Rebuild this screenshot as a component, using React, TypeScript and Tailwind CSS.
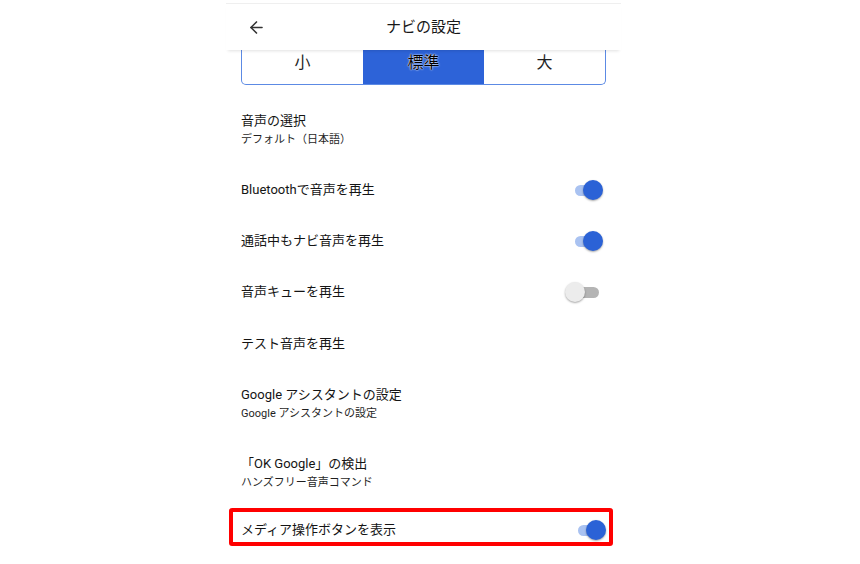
import { ArrowLeft } from "lucide-react";

const font = "font-['Roboto','Noto_Sans_CJK_JP',sans-serif]";

function Toggle({ on }: { on: boolean }) {
  return (
    <div className="relative w-[30px] h-[20px] shrink-0">
      <div
        className={`absolute left-[2px] right-[4px] top-[5px] h-[11px] rounded-full ${
          on ? "bg-[#a9c2f1]" : "bg-[#b4b4b4]"
        }`}
      />
      <div
        className={`absolute top-0 w-[20px] h-[20px] rounded-full shadow-[0_1px_2px_rgba(0,0,0,0.35)] ${
          on ? "right-0 bg-[#2b62d6]" : "left-[-8px] bg-[#ececec]"
        }`}
      />
    </div>
  );
}

function Row({
  title,
  sub,
  toggle,
}: {
  title: string;
  sub?: string;
  toggle?: boolean;
}) {
  return (
    <div className="flex items-center justify-between">
      <div className="flex flex-col">
        <span className="text-[13px] leading-[20px] text-[#141414]">{title}</span>
        {sub && (
          <span className="text-[11px] leading-[18px] text-[#1f1f1f]">{sub}</span>
        )}
      </div>
      {toggle !== undefined && (
        <div className="mr-[3px]">
          <Toggle on={toggle} />
        </div>
      )}
    </div>
  );
}

export default function App() {
  return (
    <div className={`w-[860px] h-[564px] bg-white overflow-hidden ${font}`}>
      <div className="w-[395px] ml-[226px] pt-[3px]">
        <div className="h-[47px] border-t border-[#efefef] flex items-center relative shadow-[0_3px_3px_-2px_rgba(0,0,0,0.12)]">
          <ArrowLeft className="absolute left-[21px] text-[#333]" size={19} strokeWidth={2} />
          <span className="w-full text-center text-[15px] text-[#181818]">ナビの設定</span>
        </div>

        <div className="mx-[15px] grid grid-cols-3 h-[35px] border-x border-b border-[#5c8ae4] rounded-b-[5px] overflow-hidden">
          <div className="text-center text-[16px] leading-[20px] pt-[3px] text-[#1f1f1f]">小</div>
          <div className="text-center text-[16px] leading-[20px] pt-[3px] bg-[#2d63d8] text-black [text-shadow:0_0_2px_#fff,0_0_1px_#fff]">
            標準
          </div>
          <div className="text-center text-[16px] leading-[20px] pt-[3px] text-[#1f1f1f]">大</div>
        </div>

        <div className="flex flex-col gap-[31.25px] pt-[25.5px] px-[15px]">
          <Row title="音声の選択" sub="デフォルト（日本語）" />
          <Row title="Bluetoothで音声を再生" toggle={true} />
          <Row title="通話中もナビ音声を再生" toggle={true} />
          <Row title="音声キューを再生" toggle={false} />
          <Row title="テスト音声を再生" />
          <Row title="Google アシスタントの設定" sub="Google アシスタントの設定" />
          <Row title="「OK Google」の検出" sub="ハンズフリー音声コマンド" />
        </div>

        <div className="mt-[16px] ml-[3px] w-[384px] h-[38px] border-[4px] border-[#ff0000] rounded-[3px] flex items-center justify-between pt-[6px] pl-[8px] pr-[3px]">
          <span className="text-[13px] leading-[20px] text-[#141414]">メディア操作ボタンを表示</span>
          <Toggle on={true} />
        </div>
      </div>
    </div>
  );
}
